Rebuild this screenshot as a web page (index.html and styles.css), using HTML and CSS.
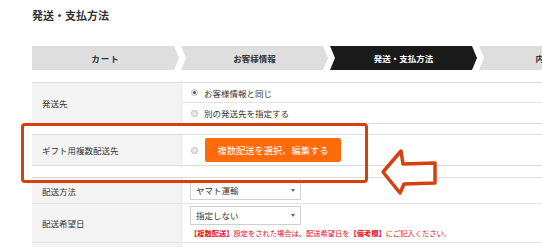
FILE: index.html
```html
<!DOCTYPE html>
<html lang="ja">
<head>
<meta charset="utf-8">
<title>発送・支払方法</title>
<link rel="stylesheet" href="styles.css">
</head>
<body>
<div class="page">
  <h1 class="title">発送・支払方法</h1>
  <ol class="steps">
    <li class="step first">カート</li>
    <li class="step">お客様情報</li>
    <li class="step current">発送・支払方法</li>
    <li class="step">内容確認</li>
  </ol>

  <div class="block ship">
    <div class="label span2">発送先</div>
    <label class="cell opt"><span class="radio checked"></span>お客様情報と同じ</label>
    <label class="cell opt"><span class="radio"></span>別の発送先を指定する</label>
  </div>

  <div class="block gift">
    <div class="label">ギフト用複数配送先</div>
    <div class="cell gift-cell"><span class="radio"></span><span class="btn">複数配送を選択、編集する</span></div>
  </div>

  <div class="block delivery">
    <div class="label row1">配送方法</div>
    <div class="cell row1 sel-cell"><div class="select">ヤマト運輸</div></div>
    <div class="label row2">配送希望日</div>
    <div class="cell row2 date-cell">
      <div class="select">指定しない</div>
      <p class="note"><b>【複数配送】</b>設定をされた場合は、配送希望日を<b>【備考欄】</b>にご記入ください。</p>
    </div>
    <div class="label row3"></div>
    <div class="cell row3"></div>
  </div>

  <div class="callout"></div>
  <svg class="arrow" width="62" height="52" viewBox="0 0 62 52">
    <polygon points="5,26 23,5 25,18 57,17 57,37 26,38 22,47" fill="#fff" stroke="#d6400e" stroke-width="3.5" stroke-linejoin="round"/>
  </svg>
</div>
</body>
</html>
```

FILE: styles.css
```css
html, body {
  margin: 0;
  overflow: hidden;
  background: #fff;
}
body {
  font-family: "Noto Sans CJK JP", "Noto Sans", sans-serif;
  color: #333;
  font-size: 8.5px;
}
.page {
  position: relative;
  padding: 8px 0 0 32px;
  width: 600px;
}
.title {
  margin: 0;
  font-size: 11px;
  font-weight: bold;
  line-height: 14px;
  height: 14px;
  color: #333;
}
.steps {
  display: flex;
  gap: 2px;
  margin: 24px 0 0;
  padding: 0;
  list-style: none;
  height: 24px;
}
.step {
  flex: none;
  width: 147px;
  height: 24px;
  background: #dedede;
  clip-path: polygon(0 0, calc(100% - 5px) 0, 100% 50%, calc(100% - 5px) 100%, 0 100%, 5px 50%);
  text-align: center;
  line-height: 24px;
  font-weight: bold;
  font-size: 8.5px;
  color: #333;
}
.step.first {
  clip-path: polygon(0 0, calc(100% - 5px) 0, 100% 50%, calc(100% - 5px) 100%, 0 100%);
  letter-spacing: 1px;
}
.step.current {
  background: #1a1a1a;
  color: #fff;
}
.block {
  display: grid;
  grid-template-columns: 150px 1fr;
  border-top: 1px solid #dcdcdc;
  border-bottom: 1px solid #dcdcdc;
}
.ship { margin-top: 12px; }
.gift { margin-top: 10px; }
.delivery { margin-top: 11px; border-bottom: none; }
.label {
  box-sizing: border-box;
  background: #f3f3f3;
  padding-left: 10px;
  display: flex;
  align-items: center;
  border-right: 1px solid #e6e6e6;
  color: #333;
}
.span2 { grid-row: span 2; }
.cell {
  box-sizing: border-box;
  padding-left: 9px;
  display: flex;
  align-items: center;
}
.opt {
  height: 20px;
  gap: 6px;
}
.opt:first-of-type { border-bottom: 1px solid #e3e3e3; }
.radio {
  box-sizing: border-box;
  width: 7px;
  height: 7px;
  border-radius: 50%;
  border: 1px solid #bdbdbd;
  background: #e9e9e9;
  flex: none;
  display: flex;
  align-items: center;
  justify-content: center;
}
.radio.checked::after {
  content: "";
  width: 3px;
  height: 3px;
  border-radius: 50%;
  background: #555;
}
.gift-cell {
  height: 30px;
  gap: 7px;
}
.btn {
  width: 136px;
  height: 24px;
  border-radius: 2px;
  background: #ff6a0a;
  color: #fff;
  font-size: 9.25px;
  line-height: 24px;
  text-align: center;
}
.row1, .row2 { border-bottom: 1px solid #e3e3e3; }
.row1 { height: 26px; }
.row2 { height: 39px; }
.row3 { height: 20px; }
.sel-cell { padding-left: 8px; }
.date-cell {
  padding: 2px 0 0 8px;
  flex-direction: column;
  align-items: flex-start;
  justify-content: flex-start;
}
.select {
  position: relative;
  box-sizing: border-box;
  width: 111px;
  height: 19px;
  border: 1px solid #cfcfcf;
  background: #fff;
  padding-left: 5px;
  line-height: 17px;
  font-size: 8.5px;
  color: #333;
}
.select::after {
  content: "";
  position: absolute;
  right: 5px;
  top: 7px;
  border-left: 2.5px solid transparent;
  border-right: 2.5px solid transparent;
  border-top: 3px solid #666;
}
.note {
  margin: 3px 0 0;
  font-size: 7.25px;
  line-height: 10px;
  color: #e8101b;
  white-space: nowrap;
}
.callout {
  position: absolute;
  left: 21px;
  top: 123px;
  width: 347px;
  height: 60px;
  box-sizing: border-box;
  border: 3.5px solid #d6400e;
  border-radius: 4px;
}
.arrow {
  position: absolute;
  left: 378px;
  top: 146px;
}
```
